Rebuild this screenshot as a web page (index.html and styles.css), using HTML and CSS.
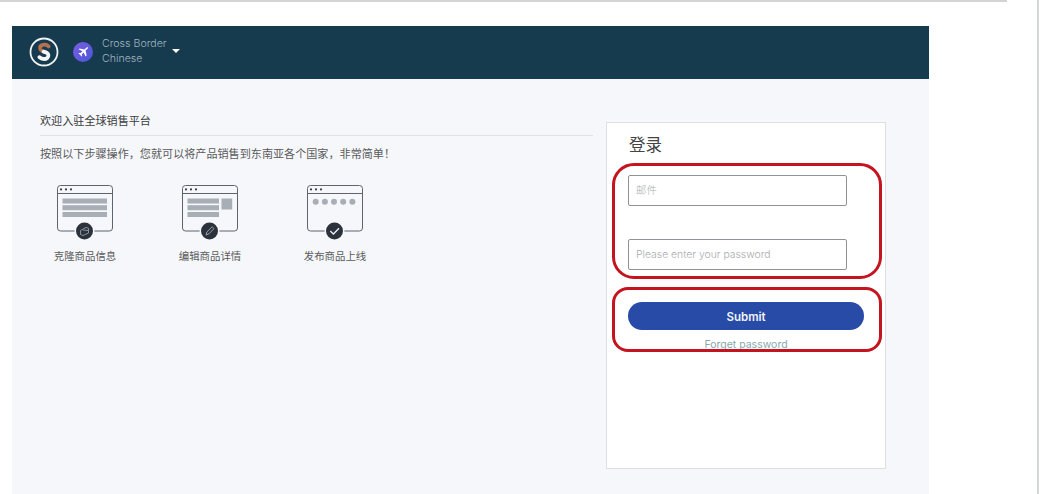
FILE: index.html
```html
<!DOCTYPE html>
<html lang="en">
<head>
<meta charset="UTF-8" />
<meta name="viewport" content="width=device-width, initial-scale=1" />
<title>Cross Border Chinese</title>
<link rel="stylesheet" href="styles.css">
</head>
<body>

<div class="page">
  <div class="top-line"></div>

  <div class="app">
    <header class="app-header">
      <svg class="logo" viewBox="0 0 30 30" width="30" height="30">
        <circle cx="15" cy="15" r="13.5" fill="none" stroke="#eef3f3" stroke-width="1.8"/>
        <path d="M19.6 9.4C18 7.8 16 7.4 14 7.8C11.8 8.3 10.8 9.8 11.2 11.6C11.6 13.2 12.8 14 14.6 14.6" fill="none" stroke="#b5714f" stroke-width="3.8" stroke-linecap="round"/>
        <path d="M14.6 14.6C17.2 15.2 19.2 16 19.4 18.2C19.6 20.4 17.6 22 15 22C13.2 22 11.6 21.4 10.4 20.2" fill="none" stroke="#f4f6f6" stroke-width="3.8" stroke-linecap="round"/>
      </svg>
      <svg class="plane" viewBox="0 0 20 20" width="20" height="20">
        <defs>
          <linearGradient id="planeBg" x1="0" y1="0" x2="1" y2="1">
            <stop offset="0" stop-color="#7a5fe0"/>
            <stop offset="1" stop-color="#4a55d8"/>
          </linearGradient>
        </defs>
        <circle cx="10" cy="10" r="10" fill="url(#planeBg)"/>
        <path d="M14.6 5.2C15.2 5.2 15.3 5.8 14.9 6.3L12.6 8.6L13.6 13.6L12.6 14.4L10.7 10.5L8.8 12.3L9 14L8.3 14.6L7.2 12.7L5.4 11.6L6 10.9L7.7 11.1L9.5 9.3L5.7 7.3L6.5 6.4L11.4 7.4L13.7 5.5C14 5.3 14.3 5.2 14.6 5.2Z" fill="#fff"/>
      </svg>
      <div class="brand-text">
        <div>Cross Border</div>
        <div>Chinese</div>
      </div>
      <span class="caret"></span>
    </header>

    <main class="app-main">
      <section class="intro">
        <h2 class="intro-title">欢迎入驻全球销售平台</h2>
        <p class="intro-desc">按照以下步骤操作，您就可以将产品销售到东南亚各个国家，非常简单！</p>

        <div class="steps">
          <div class="step">
            <svg viewBox="0 0 56 56" width="56" height="56">
              <rect x="0.5" y="0.5" width="55" height="45.5" rx="3" fill="none" stroke="#5f646c"/>
              <path d="M0.5 8.5H55.5" stroke="#5f646c"/>
              <circle cx="4" cy="4.4" r="1.1" fill="#3c424b"/>
              <circle cx="9" cy="4.4" r="1.1" fill="#3c424b"/>
              <circle cx="14" cy="4.4" r="1.1" fill="#3c424b"/>
              <rect x="5.5" y="13.5" width="44.5" height="5" fill="#a8aeb6"/>
              <rect x="5.5" y="20.2" width="44.5" height="5" fill="#a8aeb6"/>
              <rect x="5.5" y="27" width="44.5" height="5" fill="#a8aeb6"/>
              <circle cx="27.5" cy="46" r="10" fill="#f5f7fb"/>
              <circle cx="27.5" cy="46" r="8.5" fill="#2b323c"/>
              <path d="M23.5 45.5L29 42.5L31.5 43.2V48L26 50.5L23.5 49.5Z" fill="none" stroke="#8b919a"/>
              <path d="M26 45L31 45.5" stroke="#8b919a"/>
            </svg>
            <span class="step-label">克隆商品信息</span>
          </div>
          <div class="step">
            <svg viewBox="0 0 56 56" width="56" height="56">
              <rect x="0.5" y="0.5" width="55" height="45.5" rx="3" fill="none" stroke="#5f646c"/>
              <path d="M0.5 8.5H55.5" stroke="#5f646c"/>
              <circle cx="4" cy="4.4" r="1.1" fill="#3c424b"/>
              <circle cx="9" cy="4.4" r="1.1" fill="#3c424b"/>
              <circle cx="14" cy="4.4" r="1.1" fill="#3c424b"/>
              <rect x="5.5" y="13.5" width="31.5" height="5" fill="#a8aeb6"/>
              <rect x="5.5" y="20.2" width="31.5" height="5" fill="#a8aeb6"/>
              <rect x="5.5" y="27" width="31.5" height="5" fill="#a8aeb6"/>
              <rect x="39.5" y="13.5" width="10.7" height="11" fill="#a8aeb6"/>
              <circle cx="27.5" cy="46" r="10" fill="#f5f7fb"/>
              <circle cx="27.5" cy="46" r="8.5" fill="#2b323c"/>
              <path d="M24 50L25 46.8L30.2 41.8L32 43.6L27 48.8Z" fill="none" stroke="#9aa0a8"/>
            </svg>
            <span class="step-label">编辑商品详情</span>
          </div>
          <div class="step">
            <svg viewBox="0 0 56 56" width="56" height="56">
              <rect x="0.5" y="0.5" width="55" height="45.5" rx="3" fill="none" stroke="#5f646c"/>
              <path d="M0.5 8.5H55.5" stroke="#5f646c"/>
              <circle cx="4" cy="4.4" r="1.1" fill="#3c424b"/>
              <circle cx="9" cy="4.4" r="1.1" fill="#3c424b"/>
              <circle cx="14" cy="4.4" r="1.1" fill="#3c424b"/>
              <circle cx="8.7" cy="16.7" r="3" fill="#a8aeb6"/>
              <circle cx="17.9" cy="16.7" r="3" fill="#a8aeb6"/>
              <circle cx="27" cy="16.7" r="3" fill="#a8aeb6"/>
              <circle cx="36.2" cy="16.7" r="3" fill="#a8aeb6"/>
              <circle cx="45.4" cy="16.7" r="3" fill="#a8aeb6"/>
              <circle cx="27.5" cy="46" r="10" fill="#f5f7fb"/>
              <circle cx="27.5" cy="46" r="8.5" fill="#2b323c"/>
              <path d="M23.3 46L26.4 49L32 43.2" fill="none" stroke="#f0f2f4" stroke-width="1.3"/>
            </svg>
            <span class="step-label">发布商品上线</span>
          </div>
        </div>
      </section>

      <section class="login">
        <h1 class="login-title">登录</h1>
        <input class="field field-email" type="text" placeholder="邮件">
        <input class="field field-pass" type="password" placeholder="Please enter your password">
        <button class="submit-btn" type="button">Submit</button>
        <a class="forget-link" href="#">Forget password</a>

        <!-- red marks drawn over the form -->
        <div class="mark mark-fields"></div>
        <div class="mark mark-submit"></div>
      </section>
    </main>
  </div>
</div>

</body>
</html>
```

FILE: styles.css
```css
body {
  margin: 0;
  background: #fff;
  font-family: Inter, "Noto Sans CJK SC", sans-serif;
}

.page {
  width: 1039px;
  height: 494px;
  box-sizing: border-box;
  border-right: 2px solid #d4d6d6;
  overflow: hidden;
}

.top-line {
  width: 1007px;
  height: 2px;
  background: #d2d4d4;
}

.app {
  width: 917px;
  height: 468px;
  margin: 24px 0 0 12px;
  background: #f5f7fb;
}

.app-header {
  display: flex;
  align-items: center;
  height: 53px;
  padding-left: 17px;
  background: #163a4e;
}

.logo {
  margin: -2px 14px 0 0;
}

.plane {
  margin: -1px 9px 0 0;
}

.brand-text {
  margin-top: -3px;
  color: #a3b5c0;
  font-size: 10.6px;
  font-weight: 300;
  line-height: 15px;
}

.caret {
  width: 0;
  height: 0;
  margin: -4px 0 0 5px;
  border-left: 4.5px solid transparent;
  border-right: 4.5px solid transparent;
  border-top: 4px solid #fff;
}

.app-main {
  display: flex;
  align-items: flex-start;
  gap: 13px;
  padding: 34px 43px 0 28px;
}

.intro {
  flex: 1;
}

.intro-title {
  margin: 0;
  padding-bottom: 6px;
  border-bottom: 1px solid #dfe2e6;
  color: #3c3c3c;
  font-size: 11.1px;
  font-weight: 400;
  line-height: 16px;
}

.intro-desc {
  margin: 10px 0 0;
  color: #5a5a5a;
  font-size: 11.1px;
  line-height: 16px;
}

.steps {
  display: flex;
  gap: 63px;
  margin: 23px 0 0 14px;
}

.step {
  display: flex;
  flex-direction: column;
  align-items: center;
  width: 62px;
}

.step-label {
  margin-top: 8px;
  color: #5a5a5a;
  font-size: 10.4px;
  line-height: 16px;
  white-space: nowrap;
}

.login {
  position: relative;
  display: flex;
  flex-direction: column;
  align-items: flex-start;
  width: 280px;
  height: 347px;
  box-sizing: border-box;
  margin-top: 9px;
  padding: 10px 0 0 21px;
  background: #fff;
  border: 1px solid #dcdfe4;
}

.login-title {
  margin: 0 0 18px 1px;
  color: #444;
  font-size: 16.5px;
  font-weight: 400;
  line-height: 24px;
}

.field {
  width: 219px;
  height: 31px;
  box-sizing: border-box;
  padding: 0 7px 1px;
  background: #fff;
  border: 1px solid #8f9396;
  border-radius: 2px;
  font-family: inherit;
  font-size: 10.4px;
  font-weight: 300;
  outline: none;
}

.field::placeholder {
  color: #a9acaf;
}

.field-pass {
  margin-top: 33px;
}

.submit-btn {
  width: 236px;
  height: 28px;
  margin-top: 32px;
  padding: 1px 0 0;
  background: #274ba6;
  border: 0;
  border-radius: 14px;
  color: #f2f4fa;
  font-family: inherit;
  font-size: 11.5px;
  font-weight: 600;
}

.forget-link {
  width: 236px;
  margin-top: 8px;
  color: #86a8ad;
  font-size: 10.5px;
  line-height: 14px;
  text-align: center;
  text-decoration: none;
}

.mark {
  position: absolute;
  left: 5px;
  width: 270px;
  box-sizing: border-box;
  border: 3px solid #c4141f;
  pointer-events: none;
}

.mark-fields {
  top: 40px;
  height: 116px;
  border-radius: 22px;
}

.mark-submit {
  top: 164px;
  height: 65px;
  border-radius: 16px;
}
```
